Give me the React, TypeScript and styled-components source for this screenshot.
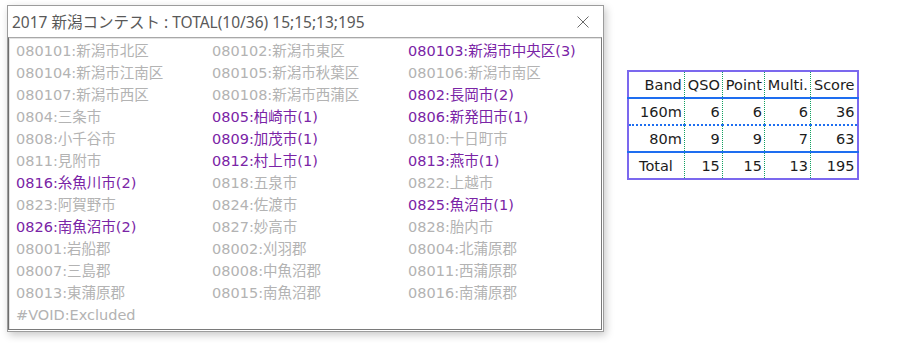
import styled, { createGlobalStyle } from 'styled-components';

const GlobalStyle = createGlobalStyle`
  html, body {
    margin: 0;
    padding: 0;
    background: #ffffff;
  }
`;

const Page = styled.div`
  display: flex;
  align-items: flex-start;
  padding: 5px 0 0 7px;
  width: 900px;
  height: 343px;
  box-sizing: border-box;
`;

const Window = styled.div`
  width: 597px;
  height: 327px;
  box-sizing: border-box;
  border: 1px solid #9c9c9c;
  background: #ffffff;
  box-shadow: 2px 3px 8px rgba(0, 0, 0, 0.22);
  display: flex;
  flex-direction: column;
`;

const TitleBar = styled.div`
  height: 31px;
  display: flex;
  align-items: center;
  justify-content: space-between;
  padding: 0 14px 0 4px;
  font-family: 'Noto Sans', 'Noto Sans CJK JP', sans-serif;
  font-size: 15.5px;
  color: #595959;
  flex-shrink: 0;
`;

const CloseButton = styled.div`
  width: 12px;
  height: 12px;
  display: flex;
  align-items: center;
  justify-content: center;
`;

const ListBox = styled.div`
  flex: 1;
  margin: 0 1px 1px 0;
  border: 1px solid #a8a8a8;
  border-left-color: #6e6e6e;
  border-right-color: #7a7a7a;
  border-bottom-color: #7a7a7a;
  box-shadow: inset 1px 1px 0 #e3e3e3;
  padding: 2px 0 0 7px;
  display: grid;
  grid-template-columns: repeat(3, 196px);
  grid-auto-rows: 22px;
  align-content: start;
  font-family: 'DejaVu Sans', 'Noto Sans CJK JP', sans-serif;
  font-size: 14.5px;
`;

const Item = styled.div<{ $hit?: boolean }>`
  color: ${(p) => (p.$hit ? '#7a24a6' : '#b3b3b3')};
  line-height: 22px;
  white-space: nowrap;
`;

const Table = styled.table`
  margin: 65px 0 0 23px;
  border-collapse: collapse;
  border: 2px solid #7b68ee;
  font-family: 'DejaVu Sans', sans-serif;
  font-size: 14.5px;
  color: #1c1c1c;
`;

const Row = styled.tr<{ $line: 'solid' | 'dotted' | 'none' }>`
  height: 27px;
  border-top: ${(p) => (p.$line === 'none' ? 'none' : `2px ${p.$line} #1e6ef0`)};
`;

const Cell = styled.td`
  text-align: right;
  padding: 0 2px 0 3px;
  border-left: 1px dotted #10a060;
  &:first-child {
    border-left: none;
    padding-left: 11px;
  }
`;

const HeadCell = styled(Cell).attrs({ as: 'th' })`
  font-weight: normal;
`;

const TotalCell = styled(Cell)`
  &:first-child {
    text-align: left;
    padding-left: 10px;
  }
`;

type Entry = [string, boolean];

const entries: Entry[] = [
  ['080101:新潟市北区', false],
  ['080102:新潟市東区', false],
  ['080103:新潟市中央区(3)', true],
  ['080104:新潟市江南区', false],
  ['080105:新潟市秋葉区', false],
  ['080106:新潟市南区', false],
  ['080107:新潟市西区', false],
  ['080108:新潟市西蒲区', false],
  ['0802:長岡市(2)', true],
  ['0804:三条市', false],
  ['0805:柏崎市(1)', true],
  ['0806:新発田市(1)', true],
  ['0808:小千谷市', false],
  ['0809:加茂市(1)', true],
  ['0810:十日町市', false],
  ['0811:見附市', false],
  ['0812:村上市(1)', true],
  ['0813:燕市(1)', true],
  ['0816:糸魚川市(2)', true],
  ['0818:五泉市', false],
  ['0822:上越市', false],
  ['0823:阿賀野市', false],
  ['0824:佐渡市', false],
  ['0825:魚沼市(1)', true],
  ['0826:南魚沼市(2)', true],
  ['0827:妙高市', false],
  ['0828:胎内市', false],
  ['08001:岩船郡', false],
  ['08002:刈羽郡', false],
  ['08004:北蒲原郡', false],
  ['08007:三島郡', false],
  ['08008:中魚沼郡', false],
  ['08011:西蒲原郡', false],
  ['08013:東蒲原郡', false],
  ['08015:南魚沼郡', false],
  ['08016:南蒲原郡', false],
  ['#VOID:Excluded', false],
];

const bands = [
  { band: '160m', qso: 6, point: 6, multi: 6, score: 36 },
  { band: '80m', qso: 9, point: 9, multi: 7, score: 63 },
];

export default function App() {
  return (
    <>
      <GlobalStyle />
      <Page>
        <Window>
          <TitleBar>
            <span>2017 新潟コンテスト : TOTAL(10/36) 15;15;13;195</span>
            <CloseButton>
              <svg width="12" height="12" viewBox="0 0 12 12">
                <path d="M0.5 0.5 L11.5 11.5 M11.5 0.5 L0.5 11.5" stroke="#6a6a6a" strokeWidth="1" fill="none" />
              </svg>
            </CloseButton>
          </TitleBar>
          <ListBox>
            {entries.map(([text, hit]) => (
              <Item key={text} $hit={hit}>
                {text}
              </Item>
            ))}
          </ListBox>
        </Window>
        <Table>
          <tbody>
            <Row $line="none">
              <HeadCell>Band</HeadCell>
              <HeadCell>QSO</HeadCell>
              <HeadCell>Point</HeadCell>
              <HeadCell>Multi.</HeadCell>
              <HeadCell>Score</HeadCell>
            </Row>
            {bands.map((b, i) => (
              <Row key={b.band} $line={i === 0 ? 'solid' : 'dotted'}>
                <Cell>{b.band}</Cell>
                <Cell>{b.qso}</Cell>
                <Cell>{b.point}</Cell>
                <Cell>{b.multi}</Cell>
                <Cell>{b.score}</Cell>
              </Row>
            ))}
            <Row $line="solid">
              <TotalCell>Total</TotalCell>
              <Cell>15</Cell>
              <Cell>15</Cell>
              <Cell>13</Cell>
              <Cell>195</Cell>
            </Row>
          </tbody>
        </Table>
      </Page>
    </>
  );
}
